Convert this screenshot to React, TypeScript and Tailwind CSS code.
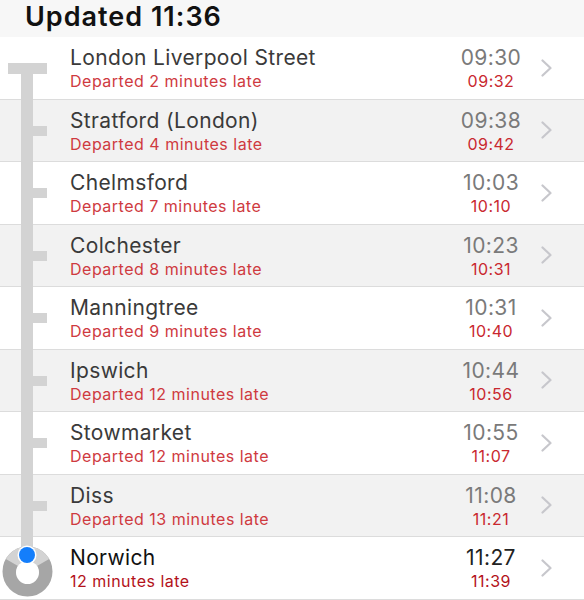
type stop = {
  name: string;
  status: string;
  scheduled: string;
  actual: string;
};

const stops: Array<stop> = [
  { name: "London Liverpool Street", status: "Departed 2 minutes late", scheduled: "09:30", actual: "09:32" },
  { name: "Stratford (London)", status: "Departed 4 minutes late", scheduled: "09:38", actual: "09:42" },
  { name: "Chelmsford", status: "Departed 7 minutes late", scheduled: "10:03", actual: "10:10" },
  { name: "Colchester", status: "Departed 8 minutes late", scheduled: "10:23", actual: "10:31" },
  { name: "Manningtree", status: "Departed 9 minutes late", scheduled: "10:31", actual: "10:40" },
  { name: "Ipswich", status: "Departed 12 minutes late", scheduled: "10:44", actual: "10:56" },
  { name: "Stowmarket", status: "Departed 12 minutes late", scheduled: "10:55", actual: "11:07" },
  { name: "Diss", status: "Departed 13 minutes late", scheduled: "11:08", actual: "11:21" },
  { name: "Norwich", status: "12 minutes late", scheduled: "11:27", actual: "11:39" },
];

function Track({ position }: { position: "first" | "middle" | "last" }) {
  if (position === "first") {
    return (
      <>
        <div className="absolute left-[21px] w-[12px] top-[26px] -bottom-px bg-[#d3d3d3]" />
        <div className="absolute left-[8px] w-[39px] top-[26px] h-[11px] bg-[#d3d3d3]" />
      </>
    );
  }
  if (position === "last") {
    return (
      <>
        <div className="absolute left-[21px] w-[12px] top-0 h-[20px] bg-[#d3d3d3]" />
        <svg className="absolute left-0 top-[7px]" width="56" height="56" viewBox="0 0 56 56">
          <circle cx="27.5" cy="27.5" r="18" fill="none" stroke="#a6a6a6" strokeWidth="14" />
          <path d="M27.5 27.5 L5.85 15 A25 25 0 0 1 49.15 15 Z" fill="#d3d3d3" />
          <circle cx="27.5" cy="28.5" r="11.5" fill="#ffffff" />
          <circle cx="27" cy="11" r="9.5" fill="#ffffff" />
          <circle cx="27" cy="11" r="8" fill="#147efb" />
        </svg>
      </>
    );
  }
  return (
    <>
      <div className="absolute left-[21px] w-[12px] top-0 -bottom-px bg-[#d3d3d3]" />
      <div className="absolute left-[33px] w-[14px] top-[26px] h-[10px] bg-[#d3d3d3]" />
    </>
  );
}

function Chevron() {
  return (
    <svg width="12" height="18" viewBox="0 0 12 18" fill="none">
      <path d="M1.5 1.5 L9.5 9 L1.5 16.5" stroke="#c7c7cc" strokeWidth="2.2" strokeLinecap="round" strokeLinejoin="round" />
    </svg>
  );
}

export default function App() {
  return (
    <section className="w-[584px] h-[600px] overflow-hidden bg-white font-['Inter',sans-serif]">
      <header className="h-[37px] bg-[#f7f7f7] pl-[25px]">
        <h1 className="text-[27px] font-semibold tracking-[1px] text-[#111] leading-[33px]">Updated 11:36</h1>
      </header>
      {stops.map((s, i) => {
        const last = i === stops.length - 1;
        return (
          <div
            key={s.name}
            className={`flex h-[62.5px] border-b border-[#dcdcdc] ${i % 2 === 1 ? "bg-[#f2f2f2]" : "bg-white"}`}
          >
            <div className="relative w-[70px] shrink-0">
              <Track position={i === 0 ? "first" : last ? "last" : "middle"} />
            </div>
            <div className="flex-1 flex flex-col justify-center pt-px">
              <span className={`text-[21px] leading-[26px] tracking-[0.35px] ${last ? "text-[#111]" : "text-[#3a3a3a]"}`}>
                {s.name}
              </span>
              <span className={`text-[16px] leading-[20px] tracking-[0.5px] ${last ? "text-[#b3121a]" : "text-[#cf3a3f]"}`}>
                {s.status}
              </span>
            </div>
            <div className="w-[80px] flex flex-col justify-center items-center pt-px">
              <span className={`text-[21px] leading-[26px] tracking-[0.4px] ${last ? "text-[#222]" : "text-[#7a7a7a]"}`}>
                {s.scheduled}
              </span>
              <span className={`text-[16px] leading-[20px] tracking-[0.5px] ${last ? "text-[#b3121a]" : "text-[#c9282f]"}`}>
                {s.actual}
              </span>
            </div>
            <div className="w-[53px] flex items-center pl-[10px]">
              <Chevron />
            </div>
          </div>
        );
      })}
    </section>
  );
}
